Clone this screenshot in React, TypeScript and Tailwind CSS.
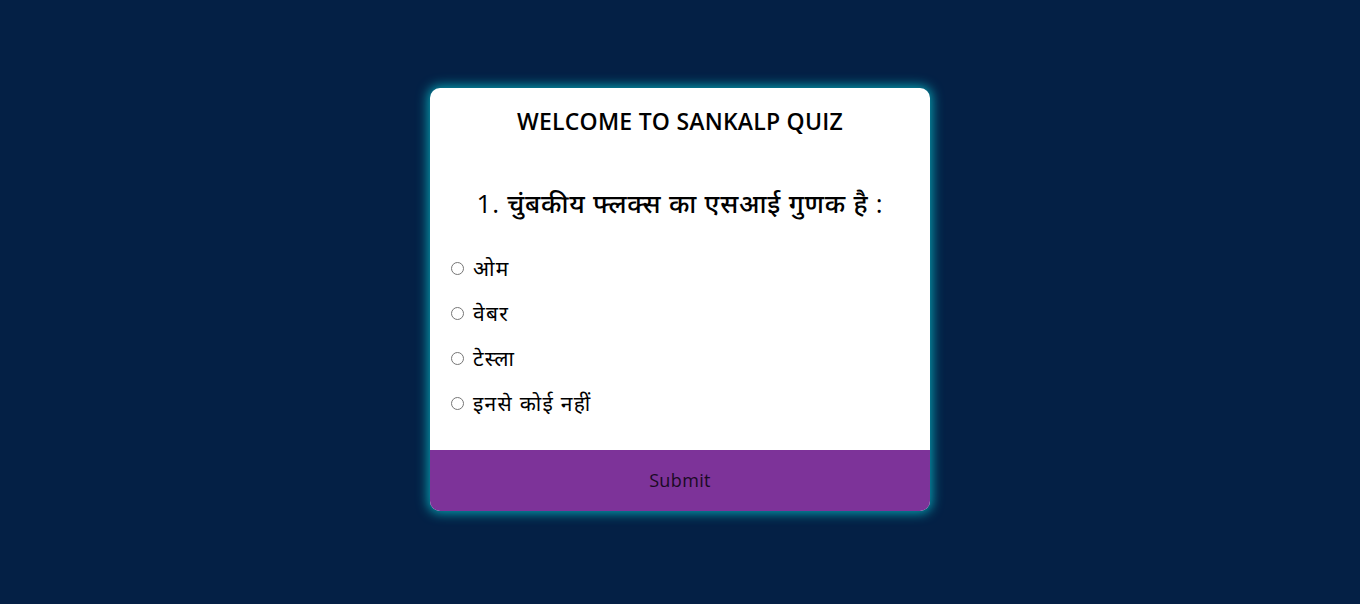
import React from "react";

const options = ["ओम", "वेबर", "टेस्ला", "इनसे कोई नहीं"];

export default function App() {
  return (
    <div className="w-full min-h-[604px] bg-[#042045] flex justify-center pt-[88px]">
      <div
        className="w-[500px] h-[423px] bg-white rounded-[10px] overflow-hidden flex flex-col shadow-[0_0_12px_2px_#07a2b2] text-black"
        style={{ fontFamily: '"Open Sans", "Noto Sans", sans-serif' }}
      >
        <div className="flex-1 flex flex-col">
          <h2 className="text-center text-[23px] font-semibold tracking-[0.01em] leading-[30px] pt-[18px]">
            WELCOME TO SANKALP QUIZ
          </h2>
          <h2 className="text-center text-[26px] font-medium tracking-[0.03em] leading-[34px] mt-[50px]">
            1. चुंबकीय फ्लक्स का एसआई गुणक है :
          </h2>
          <ul className="mt-[35px] px-[21px] flex flex-col gap-[19px]">
            {options.map((o, i) => (
              <li key={i} className="flex items-center h-[26px]">
                <span className="w-[13px] h-[13px] rounded-full border border-[#767676] bg-white mr-[9px] mt-[1px]" />
                <label className="text-[21px] font-normal tracking-[0.06em] leading-[26px]">{o}</label>
              </li>
            ))}
          </ul>
        </div>
        <button className="h-[61px] bg-[#7d3399] text-[18px] tracking-[0.02em] text-[#1a0a24] w-full">
          Submit
        </button>
      </div>
    </div>
  );
}
